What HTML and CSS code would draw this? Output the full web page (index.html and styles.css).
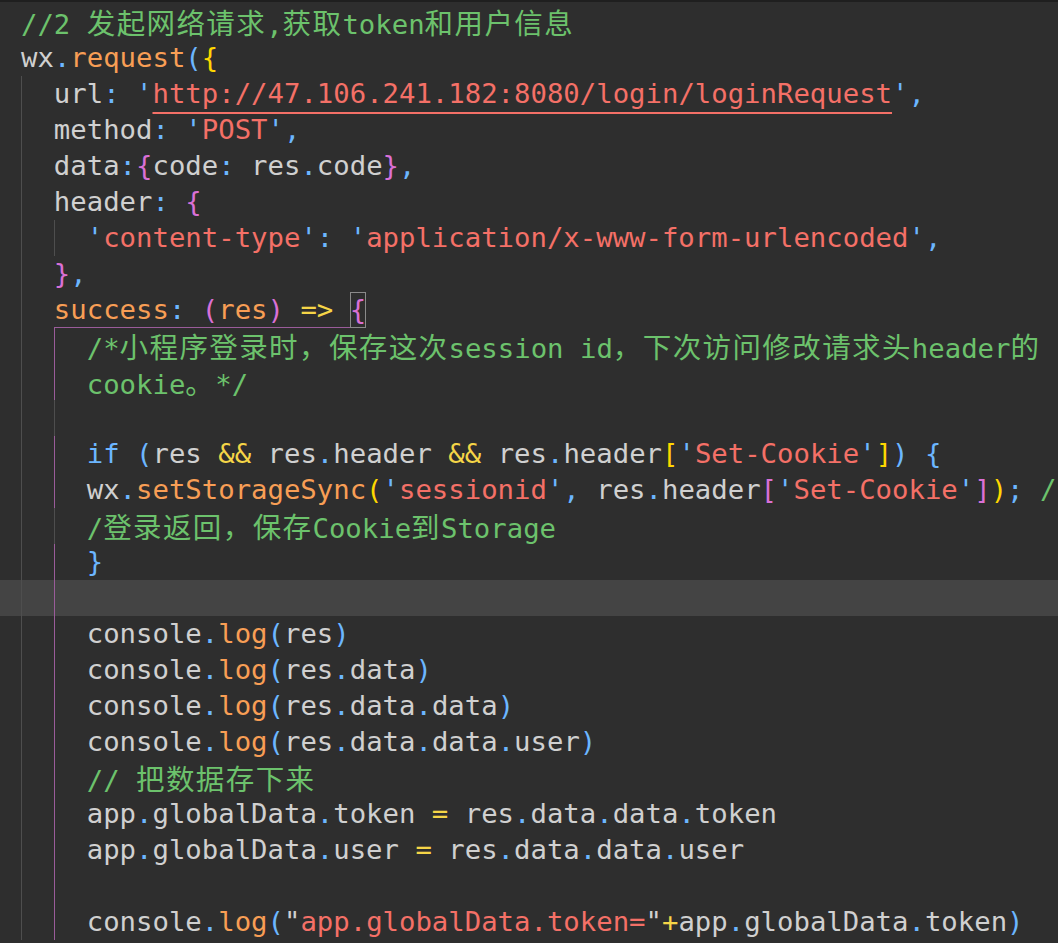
FILE: index.html
```html
<!DOCTYPE html>
<html lang="zh-CN">
<head>
  <meta charset="UTF-8">
  <meta name="viewport" content="width=device-width, initial-scale=1.0">
  <title>login.js</title>
  <link rel="stylesheet" href="styles.css">
</head>
<body>
  <div class="editor">
    <div class="line"><span class="c">//2 <span class="zh">发起网络请求</span>,<span class="zh">获取</span>token<span class="zh">和用户信息</span></span></div>
    <div class="line">wx<span class="p">.</span><span class="f">request</span><span class="p">(</span><span class="b1">{</span></div>
    <div class="line"><span class="g"></span>url<span class="p">:</span> <span class="p">'</span><span class="s url">http://47.106.241.182:8080/login/loginRequest</span><span class="p">',</span></div>
    <div class="line"><span class="g"></span>method<span class="p">:</span> <span class="p">'</span><span class="s">POST</span><span class="p">',</span></div>
    <div class="line"><span class="g"></span>data<span class="p">:</span><span class="b2">{</span>code<span class="p">:</span> res<span class="p">.</span>code<span class="b2">}</span><span class="p">,</span></div>
    <div class="line"><span class="g"></span>header<span class="p">:</span> <span class="b2">{</span></div>
    <div class="line"><span class="g"></span><span class="g"></span><span class="p">'</span><span class="s">content-type</span><span class="p">':</span> <span class="p">'</span><span class="s">application/x-www-form-urlencoded</span><span class="p">',</span></div>
    <div class="line"><span class="g"></span><span class="b2">}</span><span class="p">,</span></div>
    <div class="line"><span class="g"></span><span class="pair"><span class="f">success</span><span class="p">:</span> <span class="b2">(</span><span class="f">res</span><span class="b2">)</span> <span class="o">=&gt;</span> </span><span class="match b2">{</span></div>
    <div class="line"><span class="g"></span><span class="g on"></span><span class="c">/*<span class="zh">小程序登录时，保存这次</span>session id<span class="zh">，下次访问修改请求头</span>header<span class="zh">的</span></span></div>
    <div class="line"><span class="g"></span><span class="g on"></span><span class="c">cookie<span class="zh">。</span>*/</span></div>
    <div class="line"><span class="g"></span><span class="g"></span></div>
    <div class="line"><span class="g"></span><span class="g on"></span><span class="k">if</span> <span class="p">(</span>res <span class="o">&amp;&amp;</span> res<span class="p">.</span>header <span class="o">&amp;&amp;</span> res<span class="p">.</span>header<span class="b1">[</span><span class="p">'</span><span class="s">Set-Cookie</span><span class="p">'</span><span class="b1">]</span><span class="p">)</span> <span class="p">{</span></div>
    <div class="line"><span class="g"></span><span class="g on"></span>wx<span class="p">.</span><span class="f">setStorageSync</span><span class="b1">(</span><span class="p">'</span><span class="s">sessionid</span><span class="p">',</span> res<span class="p">.</span>header<span class="b2">[</span><span class="p">'</span><span class="s">Set-Cookie</span><span class="p">'</span><span class="b2">]</span><span class="b1">)</span><span class="p">;</span> <span class="c">/</span></div>
    <div class="line"><span class="g"></span><span class="g"></span><span class="c">/<span class="zh">登录返回，保存</span>Cookie<span class="zh">到</span>Storage</span></div>
    <div class="line"><span class="g"></span><span class="g on"></span><span class="p">}</span></div>
    <div class="line cur"><span class="g"></span><span class="g on"></span></div>
    <div class="line"><span class="g"></span><span class="g on"></span>console<span class="p">.</span><span class="f">log</span><span class="p">(</span>res<span class="p">)</span></div>
    <div class="line"><span class="g"></span><span class="g on"></span>console<span class="p">.</span><span class="f">log</span><span class="p">(</span>res<span class="p">.</span>data<span class="p">)</span></div>
    <div class="line"><span class="g"></span><span class="g on"></span>console<span class="p">.</span><span class="f">log</span><span class="p">(</span>res<span class="p">.</span>data<span class="p">.</span>data<span class="p">)</span></div>
    <div class="line"><span class="g"></span><span class="g on"></span>console<span class="p">.</span><span class="f">log</span><span class="p">(</span>res<span class="p">.</span>data<span class="p">.</span>data<span class="p">.</span>user<span class="p">)</span></div>
    <div class="line"><span class="g"></span><span class="g on"></span><span class="c">// <span class="zh">把数据存下来</span></span></div>
    <div class="line"><span class="g"></span><span class="g on"></span>app<span class="p">.</span>globalData<span class="p">.</span>token <span class="o">=</span> res<span class="p">.</span>data<span class="p">.</span>data<span class="p">.</span>token</div>
    <div class="line"><span class="g"></span><span class="g on"></span>app<span class="p">.</span>globalData<span class="p">.</span>user <span class="o">=</span> res<span class="p">.</span>data<span class="p">.</span>data<span class="p">.</span>user</div>
    <div class="line"><span class="g"></span><span class="g on"></span></div>
    <div class="line"><span class="g"></span><span class="g on"></span>console<span class="p">.</span><span class="f">log</span><span class="p">(</span>"<span class="s">app.globalData.token=</span>"<span class="o">+</span>app<span class="p">.</span>globalData<span class="p">.</span>token<span class="p">)</span></div>
  </div>
</body>
</html>
```

FILE: styles.css
```css
html, body { margin: 0; padding: 0; background-color: #2e2e2e; overflow: hidden; }
.editor { border-top: 2px solid #1f1f1f; padding-top: 2px; font-family: "DejaVu Sans Mono", "Noto Sans CJK SC", monospace; font-size: 27.3px; line-height: 36px; color: #d0d0d0; }
.line { height: 36px; padding-left: 21px; white-space: pre; }
.line.cur { background-color: #444444; }

/* indent guides */
.g { display: inline-block; width: 2ch; height: 36px; vertical-align: top; box-sizing: border-box; border-left: 1px solid #4e4e4e; }
.g.on { border-left-color: #9a5c9a; }
.pair { display: inline-block; height: 36px; vertical-align: top; box-sizing: border-box; border-bottom: 1px solid #9a5c9a; }
.match { display: inline-block; height: 36px; vertical-align: top; box-sizing: border-box; outline: 1px solid #8a8a8a; outline-offset: -1px; }

/* cjk text runs */
.zh { font-family: "Noto Sans CJK SC", sans-serif; font-size: 28.5px; line-height: 36px; letter-spacing: 1.4px; }

/* syntax colours */
.c { color: #6cc26c; }
.s { color: #f47067; }
.f { color: #f89e55; }
.p { color: #6cb6ff; }
.k { color: #6cb6ff; }
.o { color: #f5d547; }
.b1 { color: #ffd700; }
.b2 { color: #da70d6; }
.url { text-decoration: underline; text-decoration-thickness: 2px; text-underline-offset: 9px; }
```
